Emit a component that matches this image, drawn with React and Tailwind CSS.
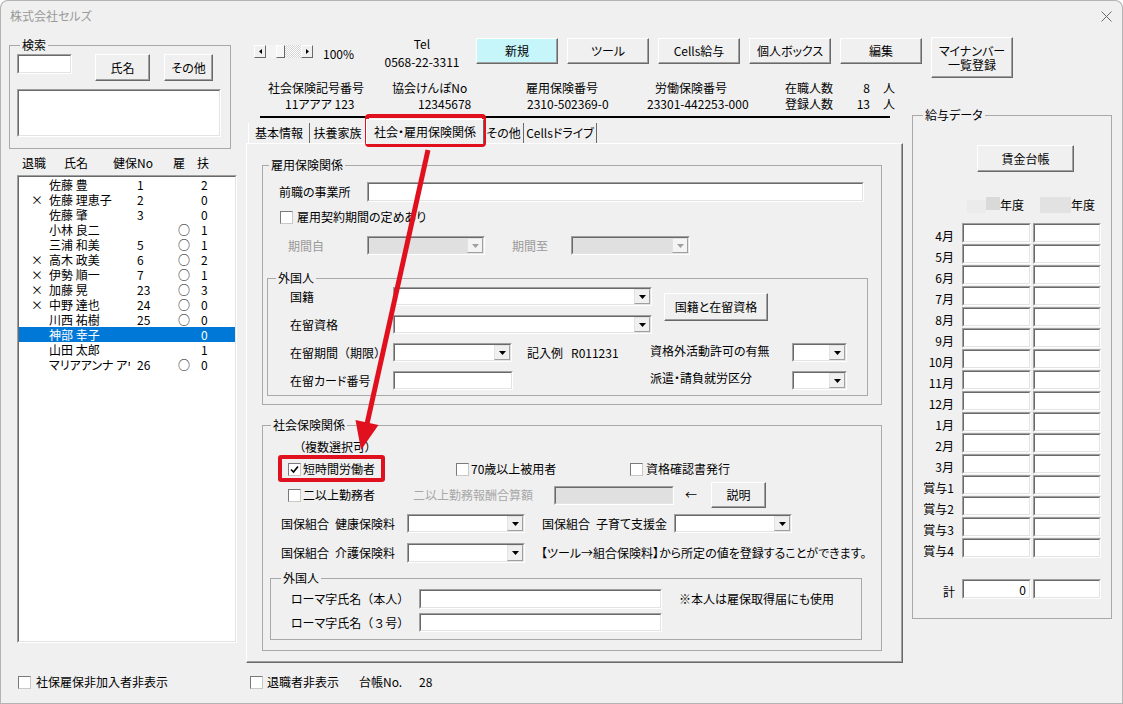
import React from "react";

function Btn({ className = "", bg = "bg-[#f0f0f0]", children }) {
  return (
    <div
      className={
        "flex items-center justify-center border border-t-white border-l-white border-r-[#696969] border-b-[#696969] shadow-[inset_-1px_-1px_0_#a0a0a0] " +
        bg +
        " " +
        className
      }
    >
      {children}
    </div>
  );
}

function Sunken({ className = "", bg = "bg-white", children }) {
  return (
    <div
      className={
        "shrink-0 border border-t-[#a0a0a0] border-l-[#a0a0a0] border-r-white border-b-white " +
        bg +
        " " +
        className
      }
    >
      <div className="h-full w-full border border-t-[#696969] border-l-[#696969] border-r-[#e3e3e3] border-b-[#e3e3e3]">
        {children}
      </div>
    </div>
  );
}

function Arrow({ disabled }) {
  return (
    <div
      className={
        "h-full w-[16px] flex items-center justify-center border border-t-[#e3e3e3] border-l-[#e3e3e3] border-r-[#a0a0a0] border-b-[#a0a0a0] " +
        (disabled ? "bg-[#f4f4f4]" : "bg-[#f0f0f0]")
      }
    >
      <svg width="7" height="4" viewBox="0 0 7 4">
        <path d="M0 0H7L3.5 4Z" fill={disabled ? "#a0a0a0" : "#000"} />
      </svg>
    </div>
  );
}

function Combo({ className = "", disabled }) {
  return (
    <Sunken className={className} bg={disabled ? "bg-[#e0e0e0]" : "bg-white"}>
      <div className="flex h-full justify-end">
        <Arrow disabled={disabled} />
      </div>
    </Sunken>
  );
}

function Check({ checked }) {
  return (
    <div className="w-[13px] h-[13px] shrink-0 bg-white border border-t-[#7a7a7a] border-l-[#7a7a7a] border-r-[#c8c8c8] border-b-[#c8c8c8] flex items-center justify-center">
      {checked && (
        <svg width="9" height="9" viewBox="0 0 9 9">
          <path d="M1 4.5L3.5 7L8 1.5" fill="none" stroke="#000" strokeWidth="1.6" />
        </svg>
      )}
    </div>
  );
}

function Frame({ label, className = "", legend = "", children }) {
  return (
    <fieldset className={"border border-[#a9a9a9] min-w-0 shrink-0 " + className}>
      <legend className={"px-[2px] leading-[14px] " + legend}>{label}</legend>
      {children}
    </fieldset>
  );
}

function P({ children }) {
  return <span className="[font-feature-settings:normal]">{children}</span>;
}

const people = [
  ["", "佐藤 豊", "1", "", "2"],
  ["×", "佐藤 理恵子", "2", "", "0"],
  ["", "佐藤 肇", "3", "", "0"],
  ["", "小林 良二", "", "○", "1"],
  ["", "三浦 和美", "5", "○", "1"],
  ["×", "高木 政美", "6", "○", "2"],
  ["×", "伊勢 順一", "7", "○", "1"],
  ["×", "加藤 晃", "23", "○", "3"],
  ["×", "中野 達也", "24", "○", "0"],
  ["", "川西 祐樹", "25", "○", "0"],
  ["", "神部 幸子", "", "", "0"],
  ["", "山田 太郎", "", "", "1"],
  ["", "マリアアンナ アウグスト", "26", "○", "0"],
];

const months = ["4月", "5月", "6月", "7月", "8月", "9月", "10月", "11月", "12月", "1月", "2月", "3月", "賞与1", "賞与2", "賞与3", "賞与4"];

function ScrollBtn({ dir }) {
  return (
    <div className="w-[12px] h-[13px] flex items-center justify-center bg-[#f0f0f0] border border-t-white border-l-white border-r-[#696969] border-b-[#696969]">
      <svg width="3" height="5" viewBox="0 0 3 5">
        <path d={dir === "l" ? "M3 0V5L0 2.5Z" : "M0 0V5L3 2.5Z"} fill="#000" />
      </svg>
    </div>
  );
}

export default function App() {
  return (
    <div className="relative w-[1123px] h-[704px] overflow-hidden bg-[#f0f0f0] text-[12px] leading-[14px] text-black font-['Noto_Sans_CJK_JP',sans-serif] [font-feature-settings:'palt'] rounded-t-[8px] shadow-[inset_0_0_0_1px_#b4b4b4]">
      {/* title bar */}
      <div className="h-[32px] flex items-center justify-between pl-[10px] pr-[11px] text-[#9a9a9a]">
        <span>株式会社セルズ</span>
        <svg width="11" height="11" viewBox="0 0 11 11">
          <path d="M0.5 0.5L10.5 10.5M10.5 0.5L0.5 10.5" stroke="#6a6a6a" strokeWidth="1" />
        </svg>
      </div>

      <div className="flex h-[672px]">
        {/* LEFT COLUMN */}
        <div className="w-[246px] shrink-0 flex flex-col">
          <Frame label="検索" className="mt-[6px] ml-[9px] w-[222px] h-[111px]" legend="ml-[10px]">
            <div className="flex items-start mt-[2px] ml-[7px]">
              <Sunken className="w-[55px] h-[20px]" />
              <Btn className="ml-[23px] w-[55px] h-[27px]">氏名</Btn>
              <Btn className="ml-[14px] w-[49px] h-[27px]">その他</Btn>
            </div>
            <Sunken className="mt-[8px] ml-[7px] w-[204px] h-[48px]" />
          </Frame>

          <div className="mt-[7px] flex pl-[22px] h-[14px]">
            <span className="w-[42px]">退職</span>
            <span className="w-[49px]">氏名</span>
            <span className="w-[60px]">健保No</span>
            <span className="w-[24px]">雇</span>
            <span>扶</span>
          </div>

          <Sunken className="mt-[5px] ml-[17px] w-[220px] h-[468px]">
            {people.map((p, i) => (
              <div
                key={i}
                className={
                  "flex h-[15px] leading-[15px] pl-[12px] whitespace-nowrap " +
                  (i === 10 ? "bg-[#0078d7] text-white" : "")
                }
              >
                <span className="w-[18px] shrink-0">{p[0]}</span>
                <span className="w-[81px] shrink-0 overflow-hidden">{p[1]}</span>
                <span className="ml-[7px] w-[41px] shrink-0">{p[2]}</span>
                <span className="w-[23px] shrink-0">{p[3]}</span>
                <span>{p[4]}</span>
              </div>
            ))}
          </Sunken>

          <div className="mt-[32px] h-[14px] flex items-center pl-[18px]">
            <Check />
            <span className="ml-[5px]">社保雇保非加入者非表示</span>
          </div>
        </div>

        {/* MIDDLE + RIGHT */}
        <div className="flex-1 flex flex-col">
          {/* toolbar */}
          <div className="mt-[3px] pl-[8px] flex items-start h-[43px]">
            <div className="mt-[10px] flex h-[13px]">
              <ScrollBtn dir="l" />
              <div className="w-[10px] h-[13px] bg-[#f4f4f4]" />
              <div className="w-[9px] h-[13px] bg-[#f7f7f7] border border-t-white border-l-white border-r-[#696969] border-b-[#696969]" />
              <div className="w-[16px] h-[13px] bg-[repeating-conic-gradient(#d4d4d4_0_25%,#ffffff_0_50%)] bg-[length:2px_2px]" />
              <ScrollBtn dir="r" />
            </div>
            <span className="ml-[10px] mt-[12px] w-[40px]">100%</span>
            <div className="ml-[19px] w-[80px] text-center leading-[18px]">
              <div>Tel</div>
              <div>0568-22-3311</div>
            </div>
            <div className="ml-[14px] mt-[3px] flex items-start gap-[9px]">
              <Btn className="w-[82px] h-[26px]" bg="bg-[#c6f5fa]">新規</Btn>
              <Btn className="w-[82px] h-[26px]">ツール</Btn>
              <Btn className="w-[82px] h-[26px]">Cells給与</Btn>
              <Btn className="w-[82px] h-[26px]">個人ボックス</Btn>
              <Btn className="w-[82px] h-[26px]">編集</Btn>
              <Btn className="w-[82px] h-[41px] -mt-[1px] flex-col text-center leading-[14px]">
                <span>マイナンバー</span>
                <span>一覧登録</span>
              </Btn>
            </div>
          </div>

          <div className="flex">
            {/* middle column */}
            <div className="w-[657px] shrink-0 flex flex-col">
              <div className="mt-[2px] h-[16px] leading-[16px] pl-[22px] flex whitespace-nowrap">
                <span className="w-[124px]">社会保険記号番号</span>
                <span className="w-[134px]">協会けんぽNo</span>
                <span className="w-[129px]">雇用保険番号</span>
                <span className="w-[130px]">労働保険番号</span>
                <span className="w-[62px]">在職人数</span>
                <span className="w-[23px] text-right">8</span>
                <span className="ml-[13px]">人</span>
              </div>
              <div className="h-[16px] leading-[16px] pl-[39px] flex whitespace-nowrap">
                <span className="w-[133px]">11アアア 123</span>
                <span className="w-[109px]">12345678</span>
                <span className="w-[120px]">2310-502369-0</span>
                <span className="w-[138px]">23301-442253-000</span>
                <span className="w-[62px]">登録人数</span>
                <span className="w-[23px] text-right">13</span>
                <span className="ml-[13px]">人</span>
              </div>
              <div className="mt-[4px] ml-[14px] w-[630px] h-[2px] bg-black" />

              {/* tabs */}
              <div className="h-[25px] flex items-end pl-[2px]">
                <div className="w-[62px] h-[20px] flex items-center justify-center border-l border-l-white border-r border-r-[#696969]">基本情報</div>
                <div className="w-[56px] h-[20px] flex items-center justify-center border-r border-r-[#696969]">扶養家族</div>
                <div className="relative z-10 -mb-[1px] w-[118px] h-[25px] flex items-center justify-center bg-[#f0f0f0] border-t border-l border-t-white border-l-white border-r border-r-[#696969]">社会・雇用保険関係</div>
                <div className="w-[40px] h-[20px] flex items-center justify-center border-r border-r-[#696969]">その他</div>
                <div className="w-[73px] h-[20px] flex items-center justify-center border-r border-r-[#696969]">Cellsドライブ</div>
              </div>

              {/* tab page */}
              <div className="w-[657px] h-[520px] flex flex-col border border-t-white border-l-white border-r-[#696969] border-b-[#696969] shadow-[inset_-1px_-1px_0_#a0a0a0]">
                <Frame label="雇用保険関係" className="mt-[14px] ml-[15px] w-[620px] h-[247px]" legend="ml-[6px]">
                  <div className="mt-[10px] flex items-center h-[20px]">
                    <span className="ml-[16px] w-[88px]">前職の事業所</span>
                    <Sunken className="w-[497px] h-[20px]" />
                  </div>
                  <div className="mt-[8px] h-[14px] flex items-center">
                    <div className="ml-[17px]"><Check /></div>
                    <span className="ml-[4px]">雇用契約期間の定めあり</span>
                  </div>
                  <div className="mt-[12px] h-[19px] flex items-center text-[#9a9a9a]">
                    <span className="ml-[25px] w-[79px]">期間自</span>
                    <Combo className="w-[118px] h-[19px]" disabled />
                    <span className="ml-[27px] w-[59px]">期間至</span>
                    <Combo className="w-[119px] h-[19px]" disabled />
                  </div>

                  <Frame label="外国人" className="mt-[16px] ml-[4px] w-[601px] h-[125px]" legend="ml-[8px]">
                    <div className="flex items-start">
                      <div className="flex flex-col">
                        <div className="mt-[2px] h-[19px] flex items-center">
                          <span className="ml-[22px] w-[103px]">国籍</span>
                          <Combo className="w-[259px] h-[19px]" />
                        </div>
                        <div className="mt-[9px] h-[19px] flex items-center">
                          <span className="ml-[22px] w-[103px]">在留資格</span>
                          <Combo className="w-[259px] h-[19px]" />
                        </div>
                      </div>
                      <Btn className="ml-[12px] mt-[8px] w-[104px] h-[28px]">国籍と在留資格</Btn>
                    </div>
                    <div className="mt-[9px] h-[19px] flex items-center whitespace-nowrap">
                      <span className="ml-[22px] w-[103px]">在留期間<P>（期限）</P></span>
                      <Combo className="w-[119px] h-[19px]" />
                      <span className="ml-[15px] w-[123px]">
                        記入例<span className="ml-[8px]">R011231</span>
                      </span>
                      <span className="w-[142px] -mt-[3px]">資格外活動許可の有無</span>
                      <Combo className="w-[55px] h-[19px]" />
                    </div>
                    <div className="mt-[9px] h-[19px] flex items-center whitespace-nowrap">
                      <span className="ml-[22px] w-[103px]">在留カード番号</span>
                      <Sunken className="w-[120px] h-[19px]" />
                      <span className="ml-[137px] w-[142px] -mt-[5px]">派遣・請負就労区分</span>
                      <Combo className="w-[55px] h-[19px]" />
                    </div>
                  </Frame>
                </Frame>

                <Frame label="社会保険関係" className="mt-[13px] ml-[15px] w-[620px] h-[233px]" legend="ml-[8px]">
                  <div className="mt-[8px] ml-[36px] h-[14px]">（複数選択可）</div>
                  <div className="mt-[8px] h-[14px] flex items-center whitespace-nowrap">
                    <div className="ml-[25px] w-[168px] flex items-center">
                      <Check checked />
                      <span className="ml-[2px]">短時間労働者</span>
                    </div>
                    <div className="w-[174px] flex items-center">
                      <Check />
                      <span className="ml-[2px]">70歳以上被用者</span>
                    </div>
                    <div className="flex items-center">
                      <Check />
                      <span className="ml-[3px]">資格確認書発行</span>
                    </div>
                  </div>
                  <div className="mt-[6px] h-[26px] flex items-center whitespace-nowrap">
                    <div className="ml-[25px] w-[125px] flex items-center">
                      <Check />
                      <span className="ml-[2px]">二以上勤務者</span>
                    </div>
                    <span className="w-[141px] text-[#a8a8a8]">二以上勤務報酬合算額</span>
                    <Sunken className="w-[120px] h-[19px]" bg="bg-[#e0e0e0]" />
                    <span className="w-[37px] pl-[11px]">←</span>
                    <Btn className="w-[55px] h-[26px]">説明</Btn>
                  </div>
                  <div className="mt-[6px] h-[19px] flex items-center whitespace-nowrap">
                    <span className="ml-[18px] w-[126px]">
                      国保組合<span className="ml-[6px]">健康保険料</span>
                    </span>
                    <Combo className="w-[118px] h-[19px]" />
                    <span className="ml-[17px] w-[132px]">
                      国保組合<span className="ml-[6px]">子育て支援金</span>
                    </span>
                    <Combo className="w-[118px] h-[19px]" />
                  </div>
                  <div className="mt-[10px] h-[20px] flex items-center whitespace-nowrap">
                    <span className="ml-[18px] w-[126px]">
                      国保組合<span className="ml-[6px]">介護保険料</span>
                    </span>
                    <Combo className="w-[118px] h-[20px]" />
                    <span className="ml-[16px]">【ツール→組合保険料】から所定の値を登録することができます。</span>
                  </div>
                  <Frame label="外国人" className="mt-[8px] ml-[7px] w-[592px] h-[69px]" legend="ml-[10px]">
                    <div className="mt-[4px] h-[20px] flex items-center whitespace-nowrap">
                      <span className="ml-[20px] w-[128px]">ローマ字氏名<P>（本人）</P></span>
                      <Sunken className="w-[243px] h-[20px]" />
                      <span className="ml-[17px]">※本人は雇保取得届にも使用</span>
                    </div>
                    <div className="mt-[4px] h-[19px] flex items-center whitespace-nowrap">
                      <span className="ml-[20px] w-[128px]">ローマ字氏名<P>（３号）</P></span>
                      <Sunken className="w-[243px] h-[19px]" />
                    </div>
                  </Frame>
                </Frame>
              </div>

              <div className="mt-[12px] h-[14px] flex items-center pl-[4px] whitespace-nowrap">
                <div className="w-[109px] flex items-center">
                  <Check />
                  <span className="ml-[4px]">退職者非表示</span>
                </div>
                <span className="w-[60px]">台帳No.</span>
                <span>28</span>
              </div>
            </div>

            {/* right column */}
            <Frame label="給与データ" className="ml-[9px] mt-[30px] w-[200px] h-[511px]" legend="ml-[10px]">
              <Btn className="mt-[23px] ml-[64px] w-[97px] h-[27px]">賃金台帳</Btn>
              <div className="mt-[25px] h-[16px] flex items-center whitespace-nowrap">
                <div className="ml-[54px] w-[19px] h-[13px] mt-[3px] bg-[#ebebeb]" />
                <div className="w-[14px] h-[13px] -mt-[3px] bg-[#d9d9d9]" />
                <span className="w-[24px]">年度</span>
                <div className="ml-[16px] w-[31px] h-[16px] bg-[#e2e2e2]" />
                <span>年度</span>
              </div>
              <div className="mt-[10px] flex flex-col">
                {months.map((m) => (
                  <div key={m} className="h-[20px] mb-[1px] flex items-end">
                    <span className="w-[41px] text-right whitespace-nowrap">{m}</span>
                    <Sunken className="ml-[8px] w-[69px] h-[20px]" />
                    <Sunken className="ml-[2px] w-[68px] h-[20px]" />
                  </div>
                ))}
                <div className="mt-[20px] h-[20px] flex items-end">
                  <span className="w-[42px] text-right">計</span>
                  <Sunken className="ml-[7px] w-[69px] h-[20px]">
                    <div className="text-right pr-[3px] leading-[17px]">0</div>
                  </Sunken>
                  <Sunken className="ml-[2px] w-[68px] h-[20px]" />
                </div>
              </div>
            </Frame>
          </div>
        </div>
      </div>

      {/* red annotations */}
      <div className="absolute left-[365px] top-[114px] w-[121px] h-[33px] border-[4px] border-[#e0101e] rounded-[4px] pointer-events-none" />
      <div className="absolute left-[278px] top-[455px] w-[107px] h-[27px] border-[4px] border-[#e0101e] rounded-[3px] pointer-events-none" />
      <svg className="absolute left-0 top-0 pointer-events-none" width="1123" height="704" viewBox="0 0 1123 704">
        <line x1="428" y1="150" x2="367" y2="424" stroke="#e0101e" strokeWidth="5" />
        <polygon points="361,450 378.5,425 355.5,420" fill="#e0101e" />
      </svg>
    </div>
  );
}
